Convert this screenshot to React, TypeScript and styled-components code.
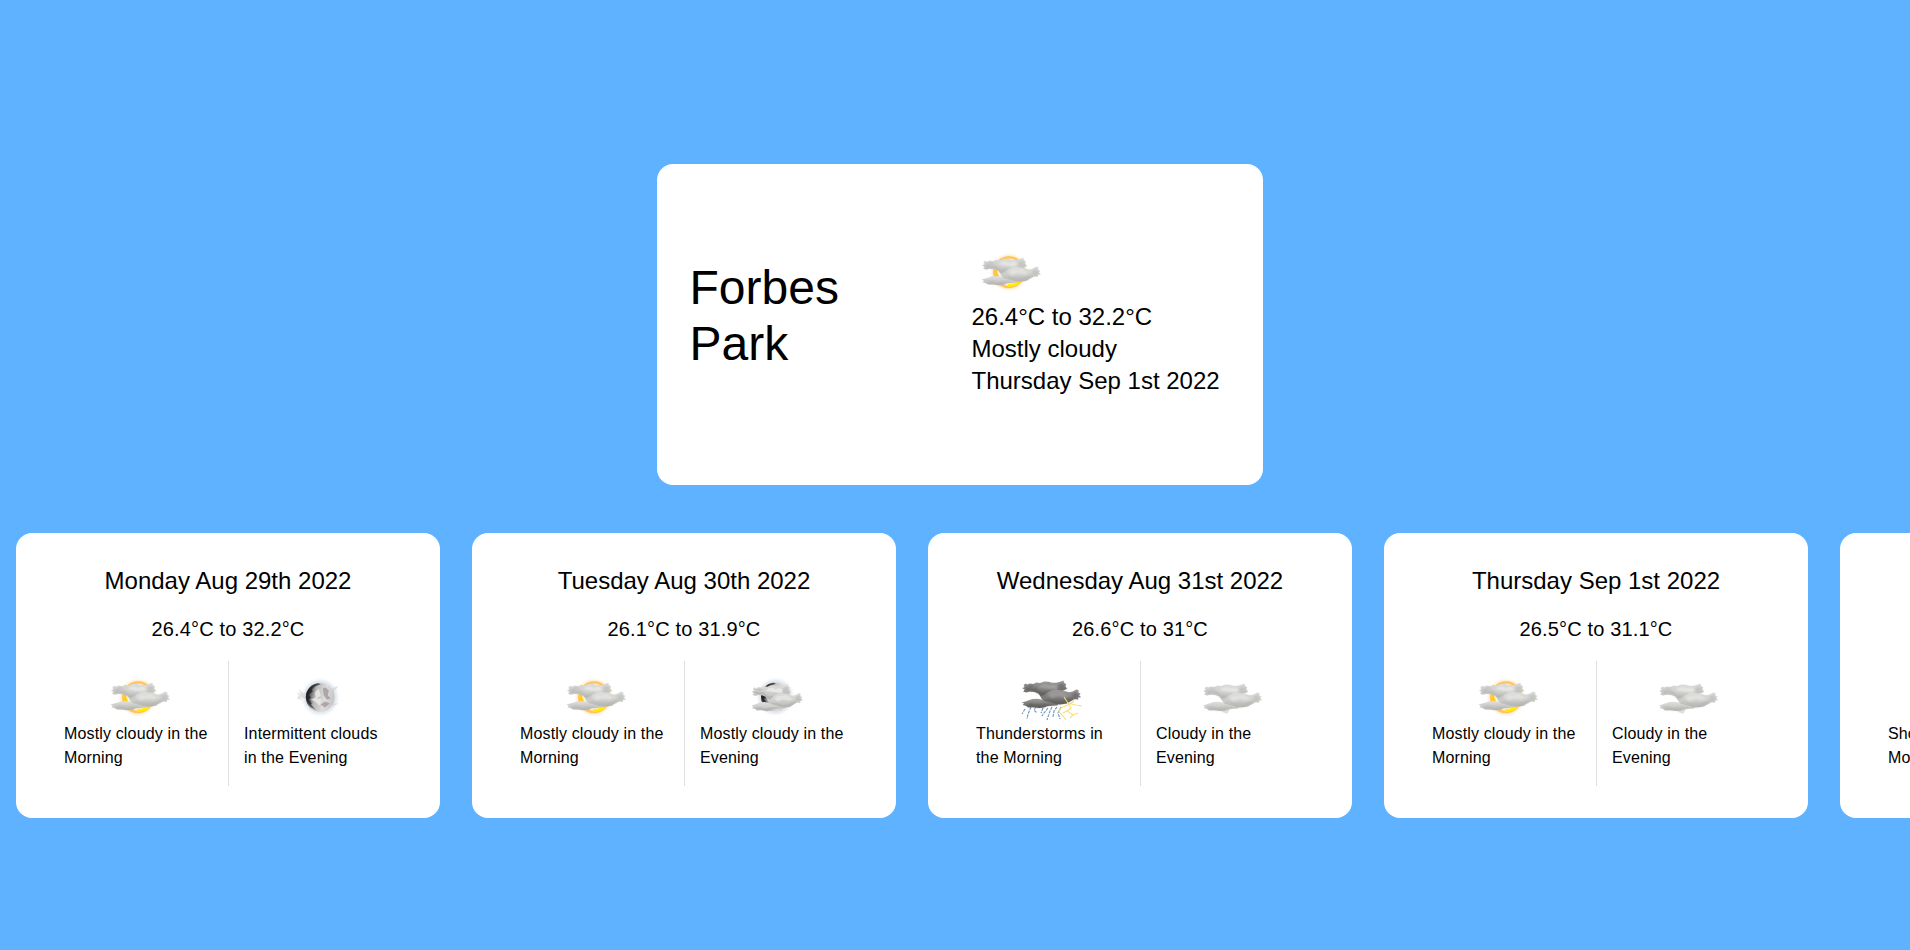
import React from "react";
import styled, { createGlobalStyle } from "styled-components";

type Sky = "sun" | "moonClouds" | "moonHazy" | "storm" | "cloudy";

const GlobalStyle = createGlobalStyle`
  *, *::before, *::after { box-sizing: border-box; }
  body {
    margin: 0;
    background: #5eb2ff;
    color: #000;
    font-family: "Liberation Sans", Arial, Helvetica, sans-serif;
    overflow: hidden;
  }
  h1, h2, h3, p { margin: 0; font-weight: 400; }
`;

const Page = styled.main`
  display: flex;
  flex-direction: column;
  align-items: center;
  gap: 48px;
  height: 950px;
  padding-top: 164px;
  overflow: hidden;
`;

const Card = styled.section`
  background: #fff;
  border-radius: 16px;
`;

const CurrentCard = styled(Card)`
  display: flex;
  align-items: center;
  flex-shrink: 0;
  width: 606px;
  height: 321px;
  margin-left: 10px;
  padding: 32px 32px 32px 32.5px;
`;

const Place = styled.h1`
  width: 200px;
  margin-right: 82px;
  padding-bottom: 18px;
  font-size: 48px;
  line-height: 56px;
`;

const Conditions = styled.div`
  display: flex;
  flex-direction: column;
  white-space: nowrap;
  font-size: 24px;
  line-height: 32px;
`;

const ConditionsIcon = styled.div`
  height: 49px;
`;

const Forecast = styled.div`
  display: flex;
  align-self: stretch;
  gap: 32px;
  padding-left: 16px;
`;

const DayCard = styled(Card)`
  display: flex;
  flex: 0 0 424px;
  flex-direction: column;
  gap: 16px;
  padding: 32px;
`;

const DayTitle = styled.h2`
  text-align: center;
  font-size: 24px;
  line-height: 32px;
`;

const DayRange = styled.h3`
  text-align: center;
  font-size: 20px;
  line-height: 32px;
  letter-spacing: 0.0075em;
`;

const Halves = styled.div`
  display: grid;
  grid-template-columns: 180px 180px;
`;

const Half = styled.div<{ $divided?: boolean }>`
  display: flex;
  flex-direction: column;
  align-items: center;
  height: 125px;
  padding: 16px;
  box-shadow: ${(p) => (p.$divided ? "1px 0 0 #e0e0e0" : "none")};
`;

const HalfText = styled.p`
  width: 148px;
  font-size: 16px;
  line-height: 24px;
  letter-spacing: 0.00938em;
`;

const IconSvg = styled.svg`
  display: block;
  width: 75px;
  height: 45px;
  flex-shrink: 0;
`;

const UPPER =
  "M12.4 10.6L14 8.8L16.2 9.8L18.5 8.6L22 9.2L25 7.8L29 8.2L33 6.8L37.5 7L41 8L45 8L49 7L52.4 5.6L52.8 8L55 9.4L54.2 11.4L56 14L53 15.4L49 16.6L43 17.4L37 19L33 22.6L29.5 21.6L27 18.6L23.5 17.2L18.5 16.8L15 17.8L12 16.6L13.6 14.8L11 13.4L13.4 12.2Z";
const MIDDLE =
  "M29 21.4L33 19.8L36 18L40.5 15.6L45 15L50 15.4L54 16.4L58 17.4L61.5 16.8L65 14.6L67.6 15.4L67 17.4L69.4 19L67.8 20.4L70 22.4L66.8 22.8L67.2 24.8L63 24.4L59 26.6L55.5 28.8L49 29.8L43.5 29L39 27.4L33 26.2L30.4 24Z";
const LOWER =
  "M10.4 27.6L14 26.6L17.6 25.4L21 24.2L26 24L31 24.8L36 25.6L41 27L47.5 29.2L46 30.6L41 31L36.5 31.2L33 32.8L28 33.2L22 32.4L17 32.6L14.6 31L11.4 30.2L13 28.8Z";

function Clouds({ id, dark = false }: { id: string; dark?: boolean }) {
  const top = dark ? "#a09e9c" : "#dededc";
  const mid = dark ? "#7b7977" : "#cbcbc9";
  const base = dark ? "#5c5a59" : "#b4b3b1";
  return (
    <g>
      <defs>
        <linearGradient id={`${id}-c`} x1="0" y1="0" x2="0" y2="1">
          <stop offset="0" stopColor={top} />
          <stop offset="0.6" stopColor={mid} />
          <stop offset="1" stopColor={base} />
        </linearGradient>
        <filter id={`${id}-s`} x="-10%" y="-20%" width="120%" height="140%" colorInterpolationFilters="sRGB">
          <feGaussianBlur stdDeviation="0.5" />
        </filter>
        <filter id={`${id}-t`} x="-10%" y="-20%" width="120%" height="140%" colorInterpolationFilters="sRGB">
          <feGaussianBlur stdDeviation="0.8" />
        </filter>
      </defs>
      <g filter={`url(#${id}-s)`}>
        <path d={LOWER} fill={`url(#${id}-c)`} />
        <path d={UPPER} fill={`url(#${id}-c)`} />
        <path d={MIDDLE} fill={`url(#${id}-c)`} />
      </g>
      <g filter={`url(#${id}-t)`}>
        <path d="M13 14L17 12.6L20 14.2L24 13.4L27 16L31 18.4L36 17.6L32 21.5L28 18.6L23 16L17 16Z" fill={base} opacity=".8" />
        <path d="M13 10.5L17 11L20 10L24 11.6L20 12.6Z" fill={base} opacity=".6" />
        <path d="M27 12.6Q32 7.4 38 10.8L43 9.6L48 12.4L44 14.6L35 13.8Z" fill={dark ? "#a9a7a5" : "#ececea"} opacity=".8" />
        <path d="M48 9L53 8.4L53 12L55 14L50 15.6L46 13.4Z" fill={base} opacity=".45" />
        <path d="M14 29.4L20 29L26 30.4L32 29.4L38 29.2L44 29.6L36 30.6L29 32.4L20 31.6Z" fill={base} opacity=".8" />
        <path d="M37 20.6Q40 16 45 18L51 16.8L56 20L60 20.6L54 22.6L47 21.4L41 23.4Z" fill={dark ? "#a09e9c" : "#e6e6e4"} opacity=".8" />
        <path d="M33 24.8L40 25L47 27.2L53 25.8L59 23.4L65 22L60 25.4L54 28.4L46 28.6L40 27Z" fill={base} opacity=".65" />
        <path d="M62 18.4L66.6 16.4L66 19.4L68.6 21.6L65 22.8L61 21Z" fill={base} opacity=".5" />
      </g>
    </g>
  );
}

function SkyIcon({ sky }: { sky: Sky }) {
  const id = React.useId().replace(/[^a-zA-Z0-9]/g, "");
  return (
    <IconSvg viewBox="0 0 75 45" aria-hidden="true">
      <defs>
        <filter id={`${id}-b`} x="-30%" y="-30%" width="160%" height="160%" colorInterpolationFilters="sRGB">
          <feGaussianBlur stdDeviation="0.6" />
        </filter>
        <filter id={`${id}-g`} x="-30%" y="-30%" width="160%" height="160%" colorInterpolationFilters="sRGB">
          <feGaussianBlur stdDeviation="1.4" />
        </filter>
        <linearGradient id={`${id}-m`} x1="0" y1="0.4" x2="1" y2="0.6">
          <stop offset="0" stopColor="#1a1a1e" />
          <stop offset="0.14" stopColor="#5a595c" />
          <stop offset="0.32" stopColor="#bdb9b9" />
          <stop offset="0.65" stopColor="#dfdbdb" />
          <stop offset="1" stopColor="#c6c3c4" />
        </linearGradient>
      </defs>

      {sky === "sun" && (
        <g transform="translate(-1 0)">
          <circle cx="38" cy="20.2" r="16.8" fill="#ffdc9c" filter={`url(#${id}-g)`} opacity=".9" />
          <circle cx="38" cy="20.2" r="13.5" fill="#fff3d8" />
          <circle cx="38" cy="20.2" r="14.8" fill="none" stroke="#ffc45c" strokeWidth="2.4" filter={`url(#${id}-b)`} />
          <path d="M24.8 17.5Q24.2 21.5 26.8 25" fill="none" stroke="#ffcb1a" strokeWidth="3" filter={`url(#${id}-b)`} />
          <path d="M37 33.4Q44 34 49 29" fill="none" stroke="#ffee00" strokeWidth="2.6" filter={`url(#${id}-b)`} />
          <Clouds id={id} />
        </g>
      )}

      {(sky === "moonClouds" || sky === "moonHazy") && (
        <>
          <g transform={sky === "moonHazy" ? "translate(0.8 1.5)" : "translate(0 1)"}>
            <circle cx="38.4" cy="18.8" r="17" fill="#d2dde7" filter={`url(#${id}-g)`} opacity=".75" />
            {sky === "moonHazy" && (
              <g filter={`url(#${id}-b)`} fill="#cfd1d3" opacity=".6">
                <path d="M15 14L19 16L17 11L22 15L26 14L24 20L18 19L21 22L15 20L17 17Z" />
                <path d="M50 10L57 7L54 11L51 14Z M52 25L57 25L50 28Z" />
              </g>
            )}
            <circle cx="38.4" cy="18.8" r="14.4" fill={`url(#${id}-m)`} filter={`url(#${id}-b)`} />
            <g filter={`url(#${id}-b)`}>
              <path d="M24.6 16Q27 6.5 36 4.8L39 5.6L33 8L30 11L31 13L27 16L29 19L27 21L30 25L29 26L34 31.5Q25 27 24.6 18Z" fill="#1c1c20" opacity=".7" />
              <path d="M41 10L44 9L47 12L46 17L49 20L45 21L42 17Z M39 26L43 23L48 25L43 29Z" fill="#979394" opacity=".7" />
              <path d="M33 14L37 10L39 17L35 20L40 21L38 27L33 23L29 21L34 19Z" fill="#f0eded" opacity=".75" />
            </g>
          </g>
          {sky === "moonClouds" && (
            <g transform="translate(5.1 1.6) scale(.87 .98)">
              <Clouds id={id} />
            </g>
          )}
        </>
      )}

      {sky === "storm" && (
        <>
          <g transform="translate(-1.8 -2.2)">
            <Clouds id={id} dark />
          </g>
          <g fill="none" stroke="#4f81b0" strokeWidth="1.1" strokeDasharray="3 1" opacity=".85">
            <path d="M18 30L15 37L14 42 M12 32L9 37 M23 30L21 33L24 36 M30 31L28 36 M35 31L31 36L29 39 M39 30L37 34L34 43 M44 30L41 34L40 40 M48 30L45 36L47 42" />
          </g>
          <g fill="none" stroke="#f5e174" strokeWidth="1.1">
            <path d="M51 20L55 26L58 31L54 34L60 38L57 41 M61 24L57 27L48 31L46 35L51 40L53 43 M55 26L63 28L69 29 M54 34L50 36 M60 38L65 36" />
          </g>
        </>
      )}

      {sky === "cloudy" && (
        <g transform="translate(-0.8 0.8)">
          <path d="M28 32L38 31L35 36L31 34.6Z" fill="#dededd" filter={`url(#${id}-b)`} />
          <Clouds id={id} />
        </g>
      )}
    </IconSvg>
  );
}

interface Day {
  title: string;
  range: string;
  morning: [Sky, string];
  evening: [Sky, string];
}

const days: Day[] = [
  {
    title: "Monday Aug 29th 2022",
    range: "26.4°C to 32.2°C",
    morning: ["sun", "Mostly cloudy in the Morning"],
    evening: ["moonHazy", "Intermittent clouds in the Evening"],
  },
  {
    title: "Tuesday Aug 30th 2022",
    range: "26.1°C to 31.9°C",
    morning: ["sun", "Mostly cloudy in the Morning"],
    evening: ["moonClouds", "Mostly cloudy in the Evening"],
  },
  {
    title: "Wednesday Aug 31st 2022",
    range: "26.6°C to 31°C",
    morning: ["storm", "Thunderstorms in the Morning"],
    evening: ["cloudy", "Cloudy in the Evening"],
  },
  {
    title: "Thursday Sep 1st 2022",
    range: "26.5°C to 31.1°C",
    morning: ["sun", "Mostly cloudy in the Morning"],
    evening: ["cloudy", "Cloudy in the Evening"],
  },
  {
    title: "Friday Sep 2nd 2022",
    range: "26.5°C to 31°C",
    morning: ["cloudy", "Showers in the Morning"],
    evening: ["cloudy", "Cloudy in the Evening"],
  },
];

function DayForecast({ day }: { day: Day }) {
  return (
    <DayCard>
      <DayTitle>{day.title}</DayTitle>
      <DayRange>{day.range}</DayRange>
      <Halves>
        <Half $divided>
          <SkyIcon sky={day.morning[0]} />
          <HalfText>{day.morning[1]}</HalfText>
        </Half>
        <Half>
          <SkyIcon sky={day.evening[0]} />
          <HalfText>{day.evening[1]}</HalfText>
        </Half>
      </Halves>
    </DayCard>
  );
}

export default function App() {
  return (
    <>
      <GlobalStyle />
      <Page>
        <CurrentCard>
          <Place>Forbes Park</Place>
          <Conditions>
            <ConditionsIcon>
              <SkyIcon sky="sun" />
            </ConditionsIcon>
            <p>26.4°C to 32.2°C</p>
            <p>Mostly cloudy</p>
            <p>Thursday Sep 1st 2022</p>
          </Conditions>
        </CurrentCard>
        <Forecast>
          {days.map((day) => (
            <DayForecast key={day.title} day={day} />
          ))}
        </Forecast>
      </Page>
    </>
  );
}
